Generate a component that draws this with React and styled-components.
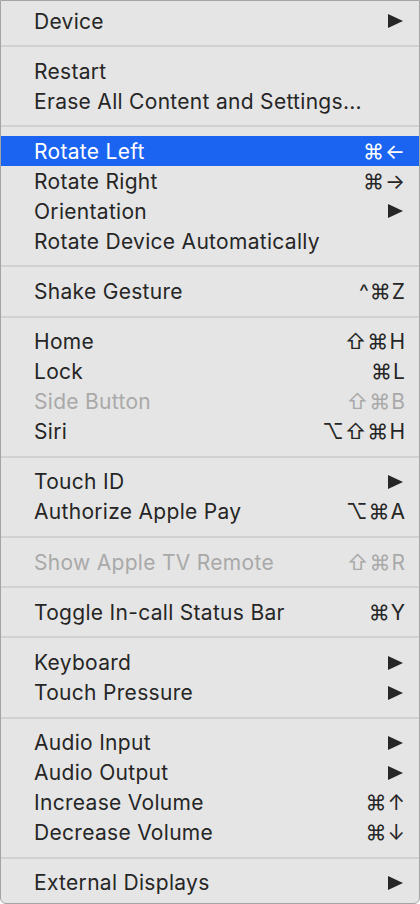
import React from "react";
import styled, { createGlobalStyle } from "styled-components";

const Global = createGlobalStyle`
  html, body {
    margin: 0;
    padding: 0;
    background: #ffffff;
  }
`;

const Menu = styled.div`
  width: 420px;
  height: 904px;
  box-sizing: border-box;
  background: #e5e5e5;
  border: 1px solid #a4a4a4;
  border-radius: 0 0 6px 6px;
  padding-top: 5px;
  font-family: Inter, "Liberation Sans", sans-serif;
  overflow: hidden;
`;

const Item = styled.div`
  height: 30px;
  display: flex;
  align-items: center;
  justify-content: space-between;
  padding: 0 13px 0 33px;
  font-size: 21px;
  color: ${(p) => (p.$active ? "#ffffff" : p.$disabled ? "#a9a9a9" : "#262626")};
  background: ${(p) => (p.$active ? "#1b64f2" : "transparent")};
`;

const Label = styled.span`
  letter-spacing: 0.3px;
`;

const Shortcut = styled.span`
  font-family: Inter, "DejaVu Sans", sans-serif;
  font-size: 21px;
  letter-spacing: 1px;
`;

const Separator = styled.div`
  height: 20.2px;
  display: flex;
  align-items: center;
  &::after {
    content: "";
    flex: 1;
    height: 2px;
    background: #d1d1d1;
  }
`;

const Arrow = styled.svg`
  width: 15px;
  height: 14px;
  margin-right: 3px;
`;

const Sub = () => (
  <Arrow viewBox="0 0 15 14">
    <polygon points="0,0 15,7 0,14" fill="#262626" />
  </Arrow>
);

const groups = [
  [{ t: "Device", sub: true }],
  [{ t: "Restart" }, { t: "Erase All Content and Settings..." }],
  [
    { t: "Rotate Left", k: "⌘←", active: true },
    { t: "Rotate Right", k: "⌘→" },
    { t: "Orientation", sub: true },
    { t: "Rotate Device Automatically" },
  ],
  [{ t: "Shake Gesture", k: "^⌘Z" }],
  [
    { t: "Home", k: "⇧⌘H" },
    { t: "Lock", k: "⌘L" },
    { t: "Side Button", k: "⇧⌘B", disabled: true },
    { t: "Siri", k: "⌥⇧⌘H" },
  ],
  [{ t: "Touch ID", sub: true }, { t: "Authorize Apple Pay", k: "⌥⌘A" }],
  [{ t: "Show Apple TV Remote", k: "⇧⌘R", disabled: true }],
  [{ t: "Toggle In-call Status Bar", k: "⌘Y" }],
  [{ t: "Keyboard", sub: true }, { t: "Touch Pressure", sub: true }],
  [
    { t: "Audio Input", sub: true },
    { t: "Audio Output", sub: true },
    { t: "Increase Volume", k: "⌘↑" },
    { t: "Decrease Volume", k: "⌘↓" },
  ],
  [{ t: "External Displays", sub: true }],
];

export default function App() {
  return (
    <>
      <Global />
      <Menu>
        {groups.map((g, gi) => (
          <React.Fragment key={gi}>
            {gi > 0 && <Separator />}
            {g.map((it) => (
              <Item key={it.t} $active={it.active} $disabled={it.disabled}>
                <Label>{it.t}</Label>
                {it.sub ? <Sub /> : it.k ? <Shortcut>{it.k}</Shortcut> : null}
              </Item>
            ))}
          </React.Fragment>
        ))}
      </Menu>
    </>
  );
}
